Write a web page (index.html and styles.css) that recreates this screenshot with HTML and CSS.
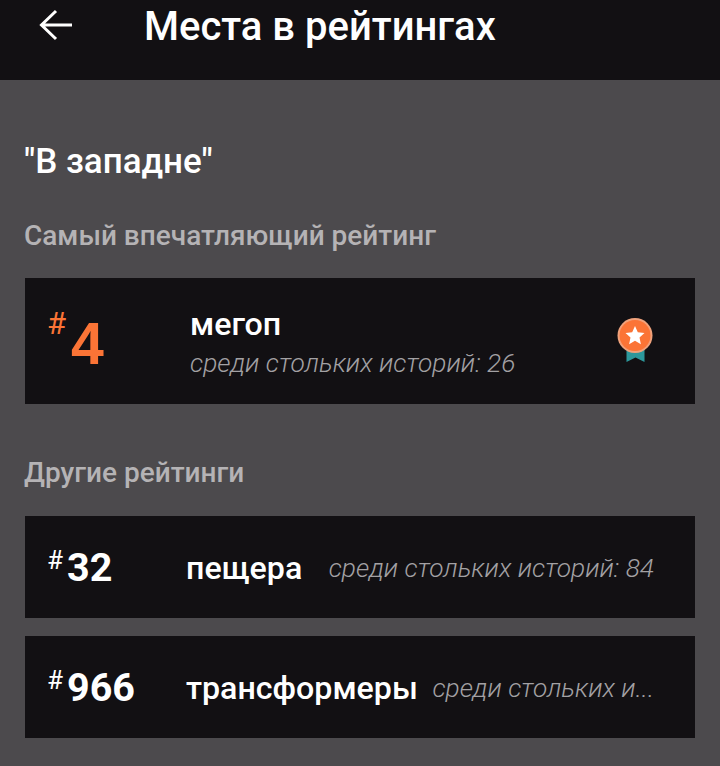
FILE: index.html
```html
<!DOCTYPE html>
<html lang="ru">
<head>
    <meta charset="UTF-8">
    <meta name="viewport" content="width=device-width, initial-scale=1.0">
    <title>Места в рейтингах</title>
    <link rel="stylesheet" href="styles.css">
</head>
<body>
    <!-- Шапка -->
    <header class="topbar">
        <svg class="back-icon" width="34" height="32" viewBox="0 0 34 32" aria-hidden="true">
            <path d="M33 16H3M17 2 2.500 16 17 30" fill="none" stroke="#fff" stroke-width="3"/>
        </svg>
        <h1 class="topbar-title">Места в рейтингах</h1>
    </header>

    <main class="content">
        <h2 class="story-title">"В западне"</h2>

        <h3 class="section-title">Самый впечатляющий рейтинг</h3>
        <div class="card card-best">
            <div class="rank rank-best"><span class="rank-hash">#</span><span class="rank-num">4</span></div>
            <div class="best-info">
                <div class="tag-name">мегоп</div>
                <div class="tag-count">среди стольких историй: 26</div>
            </div>
            <svg class="medal" width="36" height="44" viewBox="0 0 36 44" aria-hidden="true">
                <path d="M9.500 26H27.500V44L18.500 39.500 9.500 44Z" fill="#2c979b"/>
                <circle cx="18" cy="17.500" r="17.500" fill="#f0a27c"/>
                <circle cx="18" cy="17.500" r="15.500" fill="#fb7436"/>
                <path d="M18 8 20.800 14.300 27.500 15 22.500 19.500 23.900 26.200 18 22.800 12.100 26.200 13.500 19.500 8.500 15 15.200 14.300Z" fill="#fff"/>
            </svg>
        </div>

        <h3 class="section-title section-other">Другие рейтинги</h3>
        <div class="card card-row">
            <div class="rank"><span class="rank-hash">#</span><span class="rank-num">32</span></div>
            <div class="tag-name">пещера</div>
            <div class="tag-count">среди стольких историй: 84</div>
        </div>
        <div class="card card-row">
            <div class="rank"><span class="rank-hash">#</span><span class="rank-num">966</span></div>
            <div class="tag-name">трансформеры</div>
            <div class="tag-count">среди стольких и...</div>
        </div>
    </main>
</body>
</html>
```

FILE: styles.css
```css
/* Общие стили */
html, body {
    height: 100%;
}

body {
    margin: 0;
    background-color: #4c4a4d;
    color: #fff;
    font-family: Roboto, "Noto Sans", sans-serif;
    overflow: hidden;
}

/* Шапка */
.topbar {
    display: flex;
    align-items: flex-start;
    height: 80px;
    padding-left: 39px;
    background-color: #121013;
    box-sizing: border-box;
}

.back-icon {
    flex: none;
    margin-top: 9px;
}

.topbar-title {
    margin: 0 0 0 71px;
    font-size: 40px;
    line-height: 54px;
    font-weight: 500;
}

/* Контент */
.content {
    padding: 0 25px;
}

.story-title {
    margin: 62px 0 0 -1px;
    font-size: 35px;
    line-height: 40px;
    font-weight: 500;
}

.section-title {
    margin: 44px 0 0 -1px;
    font-size: 28px;
    line-height: 20px;
    font-weight: 500;
    color: #b5b3b5;
}

.section-other {
    margin-top: 59px;
}

/* Карточки */
.card {
    display: flex;
    align-items: center;
    margin-top: 18px;
    background-color: #121013;
}

.card-best {
    height: 126px;
    margin-top: 32px;
    padding: 0 42px 0 22px;
}

.card-row {
    height: 102px;
    padding: 0 41px 0 22px;
}

.section-other + .card-row {
    margin-top: 33px;
}

/* Номер в рейтинге */
.rank {
    display: flex;
    flex: none;
    width: 139px;
    align-items: flex-start;
}

.rank-hash {
    font-size: 26px;
    line-height: 28px;
    margin-top: 2px;
}

.rank-num {
    font-size: 39.500px;
    line-height: 44px;
    font-weight: 700;
    margin-left: 4px;
    margin-top: 2px;
}

.rank-best {
    width: 143px;
    color: #fb7436;
}

.rank-best .rank-hash {
    font-size: 31px;
    line-height: 30px;
    margin-top: 1px;
}

.rank-best .rank-num {
    font-size: 59px;
    line-height: 60px;
    margin-top: 6px;
    margin-left: 5px;
    font-family: "Liberation Sans", sans-serif;
}

/* Название и количество */
.best-info {
    flex: 1;
    padding-top: 1px;
}

.tag-name {
    flex: none;
    font-size: 32.200px;
    line-height: 40px;
    font-weight: 500;
    padding-top: 1px;
}

.tag-count {
    color: #a3a1a4;
    font-size: 26.300px;
    line-height: 36px;
    font-style: italic;
    font-weight: 300;
    white-space: nowrap;
    padding-top: 1px;
}

.card-row .tag-count {
    margin-left: auto;
}

.medal {
    flex: none;
    margin-bottom: 2px;
}
```
